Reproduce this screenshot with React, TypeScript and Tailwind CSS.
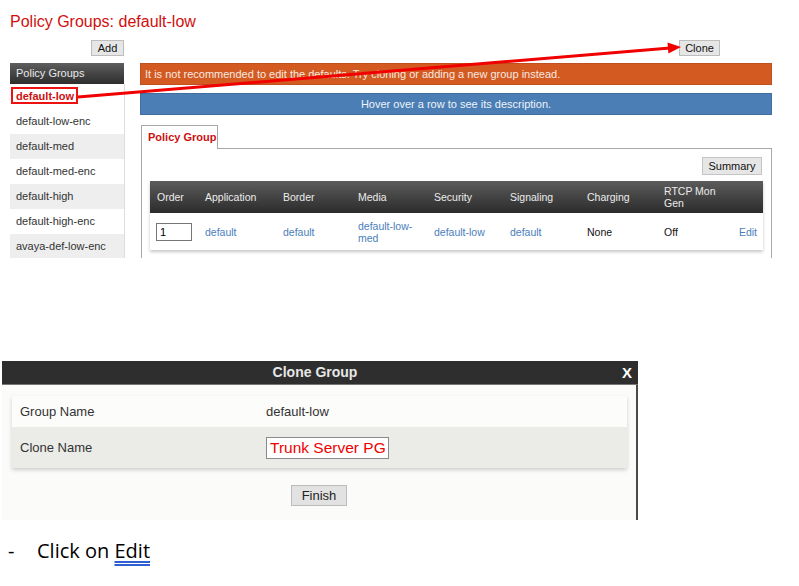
import React from "react";

const items = [
  { name: "default-low", bg: "bg-white", selected: true },
  { name: "default-low-enc", bg: "bg-white" },
  { name: "default-med", bg: "bg-[#eeeeee]" },
  { name: "default-med-enc", bg: "bg-white" },
  { name: "default-high", bg: "bg-[#eeeeee]" },
  { name: "default-high-enc", bg: "bg-white" },
  { name: "avaya-def-low-enc", bg: "bg-[#eeeeee]" },
];

const cols = [
  { h: "Order", w: "w-[48px]" },
  { h: "Application", w: "w-[78px]" },
  { h: "Border", w: "w-[75px]" },
  { h: "Media", w: "w-[76px]" },
  { h: "Security", w: "w-[76px]" },
  { h: "Signaling", w: "w-[77px]" },
  { h: "Charging", w: "w-[77px]" },
  { h: "RTCP Mon Gen", w: "w-[74px]" },
];

export default function App() {
  return (
    <div className="w-[799px] h-[586px] bg-white font-['Liberation_Sans',Arial,sans-serif] overflow-hidden">
      {/* top section */}
      <div className="relative h-[258px] overflow-hidden pl-[10px] pt-[12px]">
        <div className="text-[16px] leading-[20px] text-[#d10f0f]">Policy Groups: default-low</div>
        <div className="mt-[8px] flex h-[16px] items-start">
          <div className="w-[114px] flex justify-end">
            <button className="h-[16px] w-[33px] bg-[#e6e6e6] border border-[#bdbdbd] text-[11px] leading-[14px] text-[#111]">Add</button>
          </div>
          <div className="ml-[555px] flex">
            <button className="h-[16px] w-[41px] bg-[#e6e6e6] border border-[#bdbdbd] text-[11px] leading-[14px] text-[#111]">Clone</button>
          </div>
        </div>
        <div className="mt-[7px] flex">
          {/* sidebar */}
          <div className="w-[115px] shrink-0">
            <div className="h-[21px] w-[114px] bg-gradient-to-b from-[#5e5e5e] to-[#2e2e2e] pl-[6px] text-[11px] leading-[21px] text-[#e8e8e8]">
              Policy Groups
            </div>
            <div className="border-r border-[#dddddd]">
              {items.map((it) => (
                <div key={it.name} className={`relative h-[25px] pl-[6px] text-[11px] leading-[25px] ${it.bg}`}>
                  {it.selected ? (
                    <>
                      <span className="font-bold text-[#cc1010]">{it.name}</span>
                      <div className="absolute left-[1px] top-[3px] h-[17px] w-[67px] border-2 border-[#ee1111]" />
                    </>
                  ) : (
                    <span className="text-[#333]">{it.name}</span>
                  )}
                </div>
              ))}
            </div>
          </div>
          {/* content */}
          <div className="ml-[15px] w-[632px] shrink-0">
            <div className="h-[22px] bg-[#d35b22] border border-[#c05020] pl-[4px] text-[11px] leading-[20px] text-[#f6e9e0]">
              It is not recommended to edit the defaults. Try cloning or adding a new group instead.
            </div>
            <div className="mt-[8px] h-[22px] bg-[#4b7eb4] border border-[#3f6e9f] text-center text-[11px] leading-[20px] text-[#eef3f9]">
              Hover over a row to see its description.
            </div>
            <div className="mt-[10px] ml-[1px] flex">
              <div className="h-[24px] w-[77px] shrink-0 border-t border-l border-r border-[#a8a8a8] bg-white pl-[6px] pt-[4px] text-[11px] font-bold leading-[14px] text-[#cc1010]">
                Policy Group
              </div>
              <div className="flex-1 border-b border-[#a8a8a8]" />
            </div>
            <div className="ml-[1px] h-[120px] border-l border-r border-[#a8a8a8] pt-[8px]">
              <div className="flex justify-end pr-[9px]">
                <button className="h-[18px] w-[60px] bg-[#e6e6e6] border border-[#c4c4c4] text-[11px] leading-[16px] text-[#111]">Summary</button>
              </div>
              <div className="mt-[6px] mx-[8px] shadow-[0_2px_3px_rgba(0,0,0,0.22)]">
                <div className="flex h-[32px] items-center bg-gradient-to-b from-[#5c5c5c] to-[#2c2c2c] text-[10.5px] leading-[12px] text-[#ececec]">
                  {cols.map((c) => (
                    <div key={c.h} className={`${c.w} shrink-0 pl-[7px] pr-[4px]`}>{c.h}</div>
                  ))}
                  <div className="flex-1" />
                </div>
                <div className="flex h-[37px] items-center bg-white text-[10.5px] leading-[12px]">
                  <div className="w-[48px] shrink-0 pl-[6px]">
                    <div className="h-[18px] w-[36px] border border-[#777] pl-[3px] text-[11px] leading-[16px] text-black">1</div>
                  </div>
                  <div className="w-[78px] shrink-0 pl-[7px] text-[#4a7ebb]">default</div>
                  <div className="w-[75px] shrink-0 pl-[7px] text-[#4a7ebb]">default</div>
                  <div className="w-[76px] shrink-0 pl-[7px] pr-[6px] text-[#4a7ebb]">default-low-med</div>
                  <div className="w-[76px] shrink-0 pl-[7px] text-[#4a7ebb]">default-low</div>
                  <div className="w-[77px] shrink-0 pl-[7px] text-[#4a7ebb]">default</div>
                  <div className="w-[77px] shrink-0 pl-[7px] text-[#111]">None</div>
                  <div className="w-[74px] shrink-0 pl-[7px] text-[#111]">Off</div>
                  <div className="flex-1 pr-[6px] text-right text-[#4a7ebb]">Edit</div>
                </div>
              </div>
            </div>
          </div>
        </div>
        {/* annotation arrow */}
        <svg className="pointer-events-none absolute left-0 top-0" width="799" height="258">
          <line x1="78" y1="97" x2="670" y2="48" stroke="#f10000" strokeWidth="3" />
          <polygon points="681,47 668.4,53.5 667.5,42.5" fill="#f10000" />
        </svg>
      </div>

      {/* dialog */}
      <div className="ml-[2px] mt-[103px] h-[159px] w-[636px]">
        <div className="relative h-[24px] bg-[#2e2e2e] border-b border-[#777] pr-[10px] text-center text-[14px] font-bold leading-[23px] text-[#e6e6e6]">
          Clone Group
          <span className="absolute right-[6px] top-0 text-[15px] font-bold text-white">X</span>
        </div>
        <div className="h-[135px] bg-[#fbfbf9] border-r-[2px] border-[#4a4a4a] pt-[11px]">
          <div className="ml-[10px] mr-[9px] shadow-[0_2px_4px_rgba(0,0,0,0.18)]">
            <div className="flex h-[31px] items-center bg-[#fcfcfa] text-[13px] text-[#333]">
              <div className="w-[254px] pl-[8px]">Group Name</div>
              <div>default-low</div>
            </div>
            <div className="flex h-[41px] items-center bg-[#ebebe8] text-[13px] text-[#333]">
              <div className="w-[254px] pl-[8px]">Clone Name</div>
              <div className="h-[22px] w-[123px] whitespace-nowrap border border-[#8a8a8a] bg-white pl-[3px] text-[15.5px] leading-[20px] text-[#f00000]">
                Trunk Server PG
              </div>
            </div>
          </div>
          <div className="mt-[17px] flex justify-center">
            <button className="h-[21px] w-[56px] bg-[#e2e2e2] border border-[#bcbcbc] text-[13px] leading-[19px] text-[#222]">Finish</button>
          </div>
        </div>
      </div>

      {/* bottom text */}
      <div className="mt-[17px] flex h-[28px] items-center font-['Open_Sans',sans-serif] text-[20px] leading-[28px] text-black">
        <span className="ml-[8px] w-[29px]">-</span>
        <span>
          Click on <span className="underline decoration-double decoration-[color:#2f5fd0] underline-offset-[3px]">Edit</span>
        </span>
      </div>
    </div>
  );
}
